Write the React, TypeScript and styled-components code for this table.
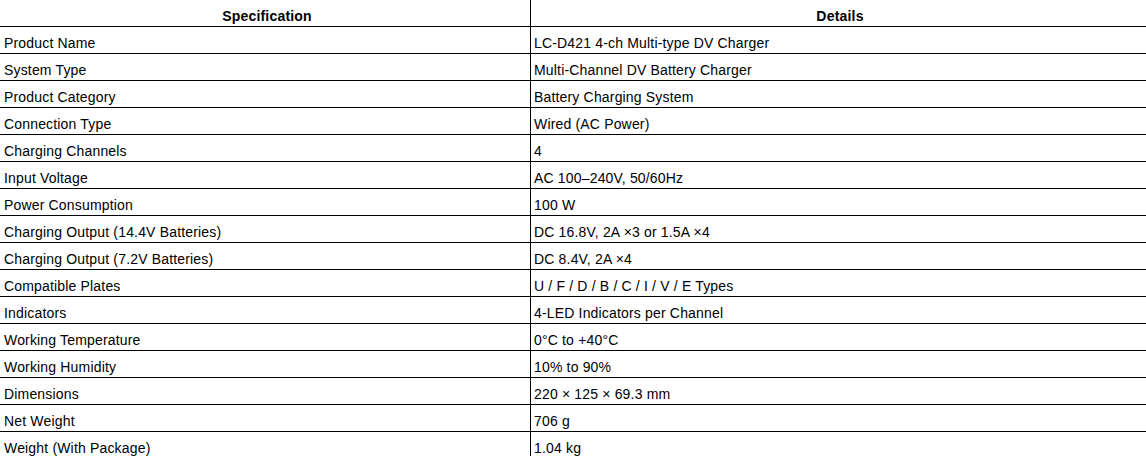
import React from 'react';
import styled, { createGlobalStyle } from 'styled-components';

interface SpecRow {
  label: string;
  value: string;
}

const specs: SpecRow[] = [
  { label: 'Product Name', value: 'LC-D421 4-ch Multi-type DV Charger' },
  { label: 'System Type', value: 'Multi-Channel DV Battery Charger' },
  { label: 'Product Category', value: 'Battery Charging System' },
  { label: 'Connection Type', value: 'Wired (AC Power)' },
  { label: 'Charging Channels', value: '4' },
  { label: 'Input Voltage', value: 'AC 100–240V, 50/60Hz' },
  { label: 'Power Consumption', value: '100 W' },
  { label: 'Charging Output (14.4V Batteries)', value: 'DC 16.8V, 2A ×3 or 1.5A ×4' },
  { label: 'Charging Output (7.2V Batteries)', value: 'DC 8.4V, 2A ×4' },
  { label: 'Compatible Plates', value: 'U / F / D / B / C / I / V / E Types' },
  { label: 'Indicators', value: '4-LED Indicators per Channel' },
  { label: 'Working Temperature', value: '0°C to +40°C' },
  { label: 'Working Humidity', value: '10% to 90%' },
  { label: 'Dimensions', value: '220 × 125 × 69.3 mm' },
  { label: 'Net Weight', value: '706 g' },
  { label: 'Weight (With Package)', value: '1.04 kg' },
];

const GlobalStyle = createGlobalStyle`
  html, body {
    margin: 0;
    padding: 0;
    background: #fff;
    overflow: hidden;
  }
  body {
    font-family: "Liberation Sans", Arial, sans-serif;
    font-size: 14px;
    color: #000;
  }
`;

const Table = styled.div`
  width: 1146px;
  display: flex;
  flex-direction: column;
`;

const Row = styled.div`
  display: grid;
  grid-template-columns: 531px 1fr;
  height: 27px;
  box-sizing: border-box;
  border-bottom: 1px solid #000;
`;

const Cell = styled.div<{ $head?: boolean; $first?: boolean }>`
  display: flex;
  align-items: flex-end;
  justify-content: ${(p) => (p.$head ? 'center' : 'flex-start')};
  box-sizing: border-box;
  padding: 0 0 2px ${(p) => (p.$first ? '4px' : '3px')};
  font-weight: ${(p) => (p.$head ? 'bold' : 'normal')};
  letter-spacing: ${(p) => (p.$head ? '0.2px' : '0.17px')};
  border-right: ${(p) => (p.$first ? '1px solid #000' : 'none')};
  white-space: nowrap;
  line-height: 16px;
`;

const App: React.FC = () => {
  return (
    <>
      <GlobalStyle />
      <Table>
        <Row>
          <Cell $head $first>Specification</Cell>
          <Cell $head>Details</Cell>
        </Row>
        {specs.map((s) => (
          <Row key={s.label}>
            <Cell $first>{s.label}</Cell>
            <Cell>{s.value}</Cell>
          </Row>
        ))}
      </Table>
    </>
  );
};

export default App;
